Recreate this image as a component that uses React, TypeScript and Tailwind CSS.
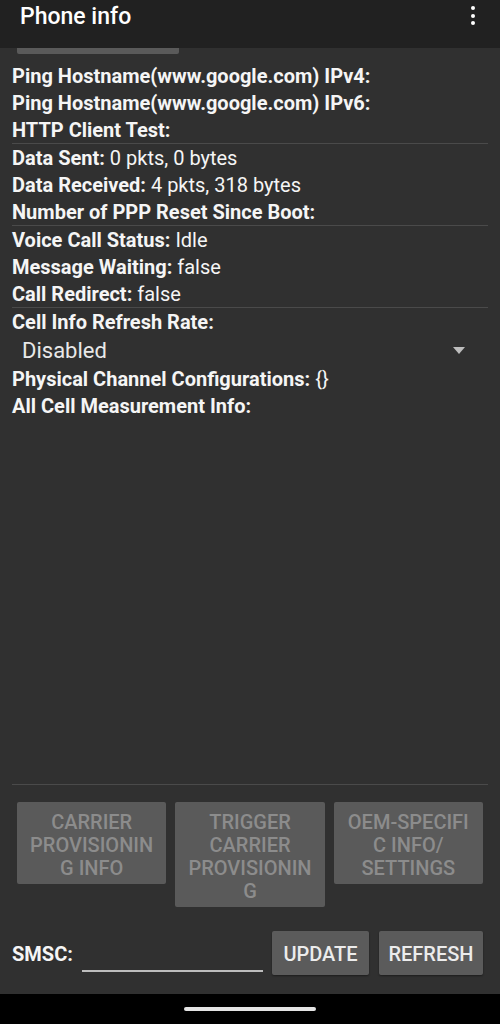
import React from "react";

const Row = ({ label, value }: { label: string; value?: string }) => (
  <div className="leading-[25px] h-[27px] pt-[2px] whitespace-nowrap">
    <span className="font-bold">{label}</span>
    {value !== undefined && <span className="font-normal"> {value}</span>}
  </div>
);

const Divider = () => <div className="h-px bg-[#4a4a4a]" />;

export default function App() {
  return (
    <div
      className="w-[500px] h-[1024px] flex flex-col bg-[#303030] text-[#f5f5f5] overflow-hidden"
      style={{ fontFamily: "Roboto, 'Noto Sans', sans-serif" }}
    >
      {/* Toolbar */}
      <div className="h-[48px] bg-[#212121] flex items-start justify-between shrink-0">
        <div className="pl-[20px] pt-[2px] text-[23px] font-medium leading-[30px] text-white">Phone info</div>
        <div className="w-[26px] pt-[6px] flex flex-col items-center gap-[3.5px] mr-[14px]">
          <div className="w-[4px] h-[4px] rounded-full bg-white" />
          <div className="w-[4px] h-[4px] rounded-full bg-white" />
          <div className="w-[4px] h-[4px] rounded-full bg-white" />
        </div>
      </div>

      {/* Content */}
      <div className="flex-1 flex flex-col">
        <div className="ml-[17px] w-[162px] h-[6px] bg-[#5a5a5a] rounded-b-[2px]" />
        <div className="px-[12px] pt-[8px] text-[20px] flex-1">
          <Row label="Ping Hostname(www.google.com) IPv4:" />
          <Row label="Ping Hostname(www.google.com) IPv6:" />
          <Row label="HTTP Client Test:" />
          <Divider />
          <Row label="Data Sent:" value="0 pkts, 0 bytes" />
          <Row label="Data Received:" value="4 pkts, 318 bytes" />
          <Row label="Number of PPP Reset Since Boot:" />
          <Divider />
          <Row label="Voice Call Status:" value="Idle" />
          <Row label="Message Waiting:" value="false" />
          <Row label="Call Redirect:" value="false" />
          <Divider />
          <Row label="Cell Info Refresh Rate:" />
          <div className="h-[30px] flex items-center justify-between pl-[10px] pr-[23px]">
            <span className="text-[22px] text-[#e8e8e8] leading-[30px] pt-[1px]">Disabled</span>
            <svg width="12" height="7" viewBox="0 0 12 7">
              <polygon points="0,0 12,0 6,7" fill="#bdbdbd" />
            </svg>
          </div>
          <Row label="Physical Channel Configurations:" value="{}" />
          <Row label="All Cell Measurement Info:" />
        </div>

        {/* Bottom section */}
        <div className="px-[12px]">
          <Divider />
        </div>
        <div className="flex items-start gap-[9px] px-[17px] mt-[17px] text-[20px] font-medium text-[#8c8c8c] leading-[23px] text-center">
          <div className="flex-1 bg-[#5a5a5a] rounded-[2px] pt-[9px] pb-[4px]">
            CARRIER<br />PROVISIONIN<br />G INFO
          </div>
          <div className="flex-1 bg-[#5a5a5a] rounded-[2px] pt-[9px] pb-[4px]">
            TRIGGER<br />CARRIER<br />PROVISIONIN<br />G
          </div>
          <div className="flex-1 bg-[#5a5a5a] rounded-[2px] pt-[9px] pb-[4px]">
            OEM-SPECIFI<br />C INFO/<br />SETTINGS
          </div>
        </div>
        <div className="mt-[24px] mb-[19px] flex items-center px-[12px] h-[44px]">
          <span className="text-[20px] font-bold w-[70px] pt-[2px]">SMSC:</span>
          <div className="w-[181px] h-[44px] flex items-end pb-[3px]">
            <div className="w-full h-[2px] bg-[#bdbdbd]" />
          </div>
          <div className="ml-[9px] w-[97px] h-[44px] pt-[2px] bg-[#5b5b5b] rounded-[2px] flex items-center justify-center text-[20px] font-medium text-[#ececec] shadow-[0_1px_2px_rgba(0,0,0,0.4)]">
            UPDATE
          </div>
          <div className="ml-[10px] w-[104px] h-[44px] pt-[2px] bg-[#5b5b5b] rounded-[2px] flex items-center justify-center text-[20px] font-medium text-[#ececec] shadow-[0_1px_2px_rgba(0,0,0,0.4)]">
            REFRESH
          </div>
        </div>
      </div>

      {/* Nav bar */}
      <div className="h-[30px] bg-black shrink-0 flex items-start justify-center pt-[13px]">
        <div className="w-[132px] h-[4px] rounded-full bg-[#e4e4e4]" />
      </div>
    </div>
  );
}
